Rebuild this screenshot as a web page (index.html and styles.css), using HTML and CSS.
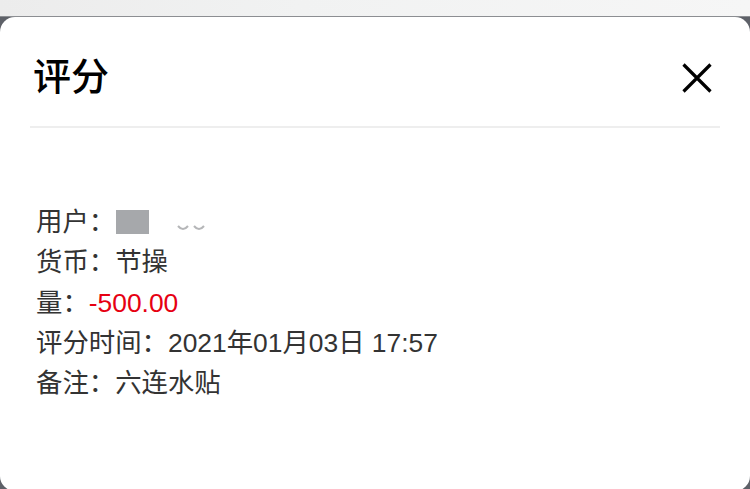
FILE: index.html
```html
<!DOCTYPE html>
<html lang="zh-CN">
<head>
<meta charset="utf-8">
<title>评分</title>
<link rel="stylesheet" href="styles.css">
</head>
<body>
<div class="topbar"></div>
<div class="modal">
  <div class="header">
    <div class="title">评分</div>
    <svg class="close" width="30" height="30" viewBox="0 0 30 30" aria-label="关闭">
      <path d="M1.5 1.5 L28.5 28.5 M28.5 1.5 L1.5 28.5" stroke="#000" stroke-width="3.2" stroke-linecap="butt" fill="none"/>
    </svg>
  </div>
  <div class="divider"></div>
  <div class="content">
    <div class="row">用户：<span class="mask"></span><svg class="blur" width="32" height="10" viewBox="0 0 32 10"><path d="M3 3 Q8 9 13 3 M19 3 Q24 9 29 3" stroke="#b5b6b8" stroke-width="2" fill="none"/></svg></div>
    <div class="row">货币：节操</div>
    <div class="row">量：<span class="neg">-500.00</span></div>
    <div class="row">评分时间：2021年01月03日 17:57</div>
    <div class="row">备注：六连水贴</div>
  </div>
</div>
</body>
</html>
```
FILE: styles.css
```css
html, body {
  margin: 0;
  padding: 0;
  width: 750px;
  height: 489px;
  overflow: hidden;
  background: #5e6168;
  font-family: "Liberation Sans", "Noto Sans CJK SC", sans-serif;
}
.topbar {
  height: 16px;
  background: linear-gradient(to right, #ececec, #f1f2f2 40%, #f6f6f6);
  border-bottom: 1px solid #8c8e92;
}
.modal {
  height: 474px;
  background: #fff;
  border-radius: 15px;
  padding: 0 30px;
  box-sizing: border-box;
}
.header {
  display: flex;
  align-items: center;
  justify-content: space-between;
  padding: 40px 8px 29px 3px;
}
.title {
  font-size: 38px;
  line-height: 40px;
  font-weight: 500;
  color: #000;
}
.close {
  display: block;
  margin-top: 1px;
}
.divider {
  height: 2px;
  background: #eeeeee;
}
.content {
  padding: 74px 0 0 6px;
}
.row {
  font-size: 26.4px;
  line-height: 40.3px;
  color: #333;
  display: flex;
  align-items: center;
  white-space: pre;
}
.mask {
  display: inline-block;
  width: 33px;
  height: 24px;
  background: #a6a8ab;
  margin-left: 1px;
}
.blur {
  margin-left: 26px;
  margin-top: 12px;
}
.neg {
  color: #e60012;
}
```
